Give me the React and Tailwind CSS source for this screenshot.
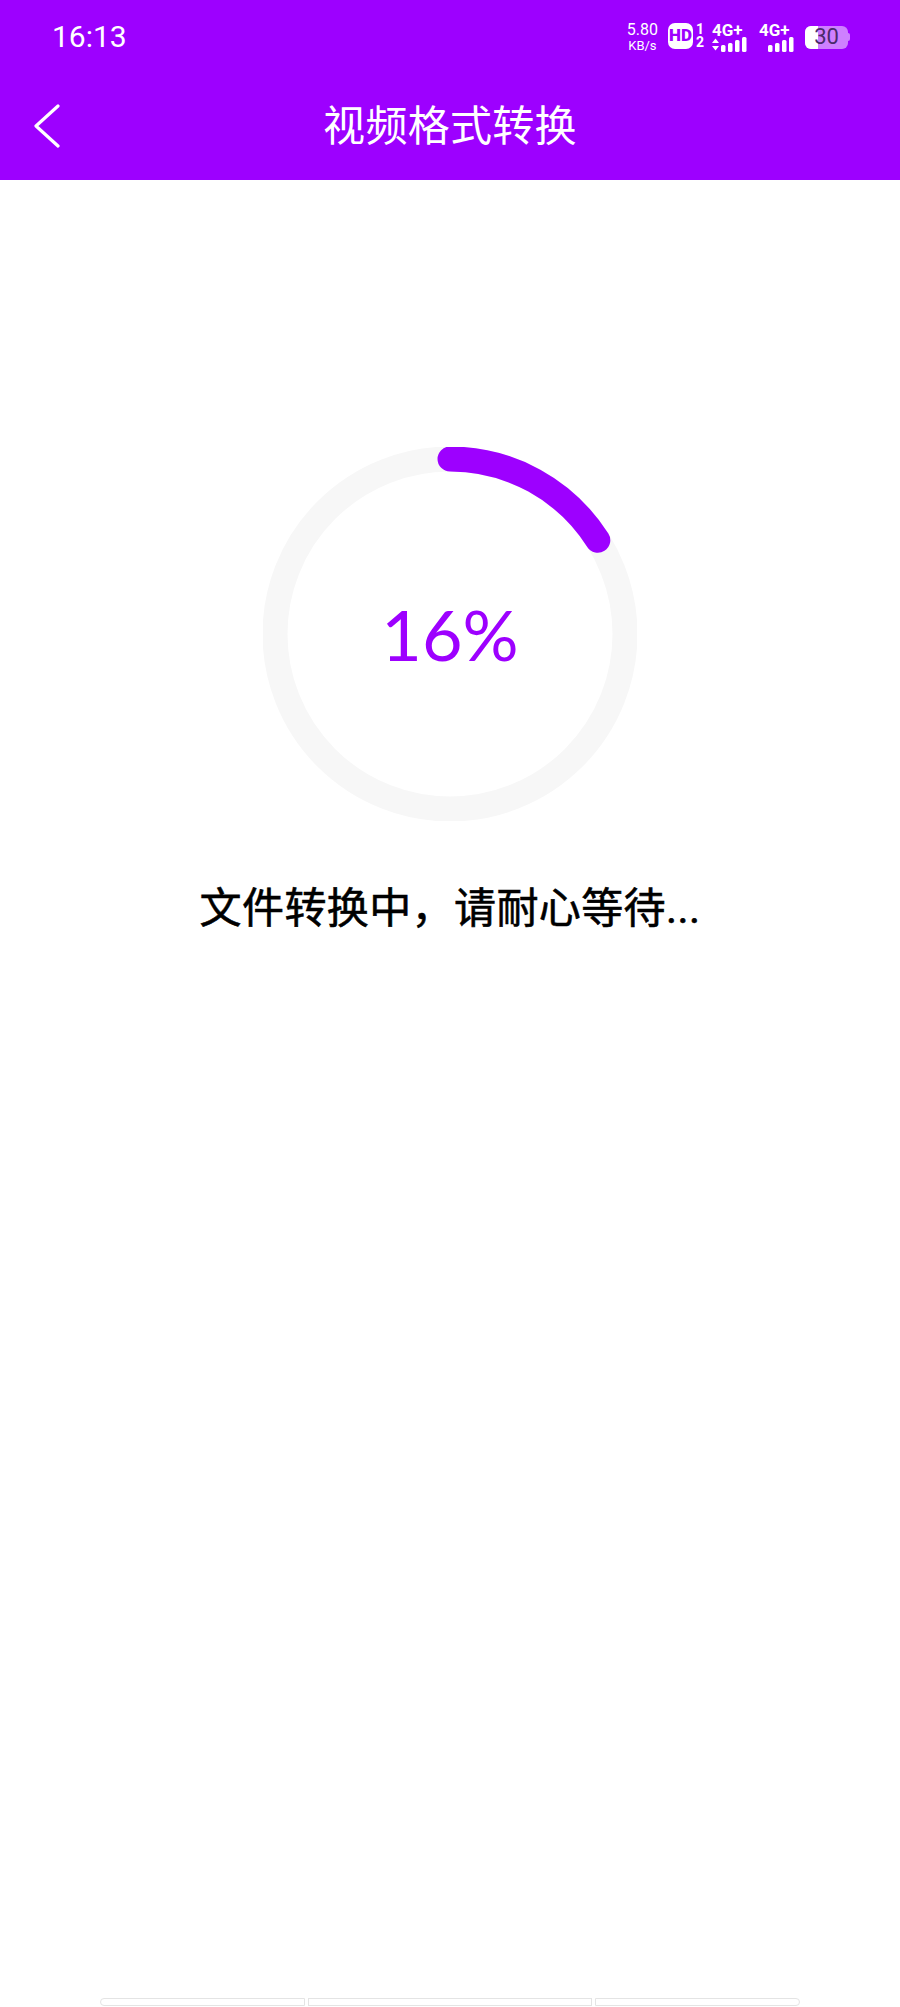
const SANS = 'font-["Roboto","Noto_Sans_CJK_SC",sans-serif]'

function SignalBars({ arrows }) {
  return (
    <svg width="38" height="15" viewBox="0 0 38 15" fill="white" className="block">
      {arrows && <path d="M0 6 L3.5 1.5 L7 6 Z M0 9 L7 9 L3.5 13.5 Z" />}
      <rect x="9" y="8" width="4.5" height="7" rx="1.5" />
      <rect x="16" y="6" width="4.5" height="9" rx="1.5" />
      <rect x="23" y="3" width="4.5" height="12" rx="1.5" />
      <rect x="30" y="0" width="4.5" height="15" rx="1.5" />
    </svg>
  )
}

function Network({ arrows }) {
  return (
    <div className="flex flex-col items-start mt-[4px]">
      <span className="font-['Roboto',sans-serif] text-[17px] leading-[13px] font-bold text-white">4G+</span>
      <SignalBars arrows={arrows} />
    </div>
  )
}

function StatusBar() {
  return (
    <div className="flex items-center h-[72px] pl-[52px] pr-[50px] text-white">
      <span className="font-['Roboto',sans-serif] text-[30px] leading-none mt-[1px]">16:13</span>
      <div className="ml-auto flex items-center">
        <div className="flex flex-col items-center font-['Roboto',sans-serif]">
          <span className="text-[16px] leading-[18px]">5.80</span>
          <span className="text-[13px] leading-[13px]">KB/s</span>
        </div>
        <div className="ml-[10px] w-[25px] h-[26px] rounded-[7px] bg-white flex items-center justify-center font-['Roboto',sans-serif] text-[17px] font-black text-[#9d00ff]">HD</div>
        <div className="ml-[2px] w-[10px] flex flex-col items-center font-['Roboto',sans-serif] text-[14px] leading-[13px] font-bold">
          <span>1</span>
          <span>2</span>
        </div>
        <div className="ml-[7px]"><Network arrows /></div>
        <div className="ml-[9px] mr-[-3px]"><Network /></div>
        <div className="ml-[11px] flex items-center">
          <div className="relative w-[43px] h-[23px] mt-[2px] rounded-[6px] bg-white/50 overflow-hidden flex items-center justify-center">
            <div className="absolute left-0 top-0 bottom-0 w-[13px] bg-white" />
            <span className="relative font-['Roboto',sans-serif] text-[22px] leading-none text-[#4a2a6a]">30</span>
          </div>
          <div className="w-[2px] h-[8px] mt-[2px] rounded-r-[2px] bg-white/50" />
        </div>
      </div>
    </div>
  )
}

function Header() {
  return (
    <div className="relative flex items-center justify-center h-[108px] pt-[2px]">
      <button className="absolute left-[34px] top-[32px]">
        <svg width="26" height="44" viewBox="0 0 26 44" fill="none" stroke="white" strokeWidth="3.2" strokeLinecap="round" strokeLinejoin="round" className="block">
          <path d="M24 2 L2 22 L24 42" />
        </svg>
      </button>
      <h1 className={`${SANS} text-[42px] leading-none font-normal tracking-[0.3px] text-white`}>视频格式转换</h1>
    </div>
  )
}

function ProgressRing({ percent }) {
  const radius = 175
  const circumference = 2 * Math.PI * radius
  return (
    <div className="relative w-[374px] h-[374px]">
      <svg width="374" height="374" viewBox="0 0 374 374" fill="none" className="block">
        <circle cx="187" cy="187" r={radius} stroke="#f7f7f7" strokeWidth="25" />
        <circle
          cx="187"
          cy="187"
          r={radius}
          stroke="#9d00ff"
          strokeWidth="25"
          strokeLinecap="round"
          strokeDasharray={`${(circumference * percent) / 100} ${circumference}`}
          transform="rotate(-90 187 187)"
        />
      </svg>
      <div className="absolute inset-0 flex items-center justify-center font-['Lato',sans-serif] text-[70px] leading-none font-normal text-[#9d00ff]">
        {percent}%
      </div>
    </div>
  )
}

export default function App() {
  return (
    <div className="flex flex-col w-[900px] h-[2007px] bg-white overflow-hidden">
      <div className="bg-[#9d00ff]">
        <StatusBar />
        <Header />
      </div>

      <div className="flex flex-col items-center pt-[267px]">
        <ProgressRing percent={16} />
        <p className={`mt-[60px] ${SANS} text-[42px] leading-[56px] font-normal tracking-[0.4px] [-webkit-text-stroke:0.6px_black] text-black`}>文件转换中，请耐心等待...</p>
      </div>

      {/* bottom nav remnants */}
      <div className="mt-auto mb-[1px] flex gap-[3px] pl-[100px] pr-[100px]">
        <div className="w-[205px] h-[8px] border border-[#e4e4e4] rounded-l-[4px]" />
        <div className="flex-1 h-[8px] border border-[#e4e4e4]" />
        <div className="w-[205px] h-[8px] border border-[#e4e4e4] rounded-r-[4px]" />
      </div>
    </div>
  )
}
